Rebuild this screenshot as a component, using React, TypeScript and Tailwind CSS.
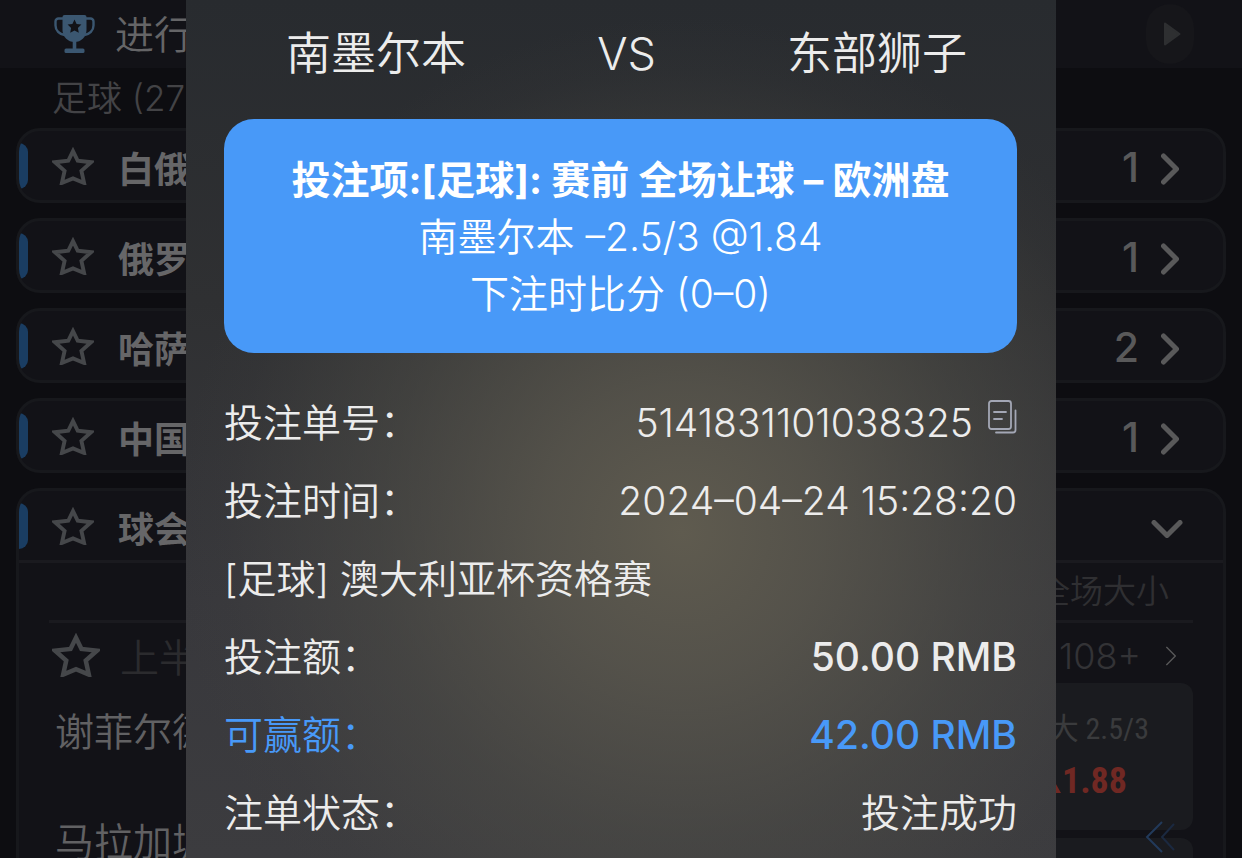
import React from 'react';

const leagues = [
  { name: '白俄', count: 1 },
  { name: '俄罗', count: 1 },
  { name: '哈萨', count: 2 },
  { name: '中国', count: 1 },
];

const StarIcon: React.FC<{ className?: string }> = ({ className }) => (
  <svg viewBox="1 1 40 37" fill="none" stroke="#45474a" strokeWidth="3.8" strokeLinejoin="miter" className={className}>
    <path d="M21 5l4.600 9.400 13 1.400-9.400 8.400 2.600 11.800L21 31.500l-10.800 4.500 2.600-11.800L3.400 15.800l13-1.400z" />
  </svg>
);

const TrophyIcon: React.FC = () => (
  <svg viewBox="0 0 41 38" fill="none" className="h-[38px] w-[41px]">
    <path d="M9 3.500H4.500a3 3 0 0 0-3 3v4c0 5 4 9 9 9.500M32 3.500h4.500a3 3 0 0 1 3 3v4c0 5-4 9-9 9.500" stroke="#3b5771" strokeWidth="2.400" />
    <path d="M10.500 0h20a2 2 0 0 1 2 2v13a12 12 0 0 1-24 0V2a2 2 0 0 1 2-2z" fill="#3b5771" />
    <path d="M18.700 26h3.600v9h-3.600z" fill="#3b5771" />
    <rect x="10.500" y="33.500" width="20" height="4.500" rx="1.500" fill="#3b5771" />
    <path d="M20.500 4.500l2.100 4.400 4.800.6-3.500 3.400.9 4.800-4.300-2.300-4.300 2.300.9-4.800-3.500-3.400 4.800-.6z" fill="#121217" />
  </svg>
);

const CopyIcon: React.FC = () => (
  <svg viewBox="0 0 29 34" fill="none" stroke="#a3a7b5" strokeWidth="1.800" strokeLinecap="round" className="h-[34px] w-[29px]">
    <rect x="1" y="1" width="22" height="28" rx="2.500" />
    <path d="M6 12h12M6 19h8M27.500 10.500V30a2.500 2.500 0 0 1-2.500 2.500H8" />
  </svg>
);

const Chevron: React.FC<{ className?: string; strokeWidth?: number }> = ({ className, strokeWidth = 5 }) => (
  <svg viewBox="0 0 18 32" fill="none" stroke="#59595a" strokeWidth={strokeWidth} strokeLinecap="round" strokeLinejoin="round" className={className}>
    <path d="M2.500 3L15.500 16 2.500 29" />
  </svg>
);

const LeagueHeader: React.FC<{ name: string; children: React.ReactNode }> = ({ name, children }) => (
  <div className="flex h-[69px] items-center pr-10">
    <span className="h-[46px] w-[9px] rounded-r-[9px] bg-[#1a3d62]" />
    <button aria-label="收藏" className="ml-6">
      <StarIcon className="h-[38px] w-[42px]" />
    </button>
    <h2 className="mt-2 ml-6 flex-1 text-[36px] leading-none font-bold text-[#666668]">{name}</h2>
    {children}
  </div>
);

const DetailRow: React.FC<{ label: string; className?: string; children: React.ReactNode }> = ({ label, className = '', children }) => (
  <div className={`flex h-[78px] items-center justify-between ${className}`}>
    <dt>{label}</dt>
    <dd className="flex items-center">{children}</dd>
  </div>
);

const MatchList: React.FC = () => (
  <div>
    <header className="flex h-[68px] items-center bg-[#121217] pr-12 pl-[54px]">
      <TrophyIcon />
      <h1 className="ml-5 flex-1 text-[39px] leading-none font-[350] text-[#656567]">进行</h1>
      <button aria-label="播放" className="flex h-[60px] w-12 items-center justify-center rounded-full bg-[#16161a]">
        <svg viewBox="0 0 18 24" className="ml-1 h-6 w-[18px]">
          <path d="M2 1.500L16.500 12 2 22.500z" fill="#2e2f31" stroke="#2e2f31" strokeWidth="2" strokeLinejoin="round" />
        </svg>
      </button>
    </header>

    <p className="h-[60px] pl-[52px] text-[35px] leading-[60px] font-[350] text-[#434346]">足球 (27</p>

    <main className="flex flex-col gap-[15px] px-4">
      {leagues.map((league) => (
        <section key={league.name} className="overflow-hidden rounded-[24px] border-[3px] border-[#17181c] bg-[#121217]">
          <LeagueHeader name={league.name}>
            <span className="mt-1 text-[41px] leading-none font-medium text-[#59595a]">{league.count}</span>
            <button aria-label="展开" className="mt-1.5 mr-1 ml-[22px]">
              <Chevron className="h-8 w-[18px]" />
            </button>
          </LeagueHeader>
        </section>
      ))}

      {/* Expanded league */}
      <section className="overflow-hidden rounded-t-[24px] border-[3px] border-b-0 border-[#17181c] bg-[#121217]">
        <LeagueHeader name="球会">
          <button aria-label="收起" className="mt-1.5 flex w-8 justify-center">
            <Chevron className="h-8 w-[18px] rotate-90" />
          </button>
        </LeagueHeader>
        <div className="border-t-[3px] border-[#1a1a1f] px-[30px]">
          <div className="flex h-[60px] items-center justify-end border-b-[3px] border-[#1a1a1f] pr-6 text-[33px] leading-none font-[350] text-[#2f2f32]">
            全场大小
          </div>
          <div className="flex h-[60px] items-center pr-4 text-[39px] leading-none font-[350] text-[#2b2b2e]">
            <button aria-label="收藏" className="mt-1 ml-[3px]">
              <StarIcon className="h-[44px] w-12" />
            </button>
            <span className="mt-2 ml-5 flex-1">上半</span>
            <a href="#markets" className="mt-1.5 flex items-center text-[36px] text-[#333336]">
              108+
              <Chevron className="ml-6 h-6 w-3" strokeWidth={2} />
            </a>
          </div>
          <div className="flex justify-between">
            <div className="flex flex-col pl-[6px] text-[39px] leading-[98px] font-[350] text-[#616163]">
              <span>谢菲尔德</span>
              <span className="mt-3">马拉加城</span>
            </div>
            <div className="flex w-[230px] flex-col gap-2 font-['Roboto_Condensed','Noto_Sans_CJK_SC',sans-serif]">
              <button className="flex h-[147px] flex-col items-end justify-center rounded-xl bg-[#1a1b1f] pr-11 pb-1 leading-[52px]">
                <span className="text-[30px] text-[#3a3b3d]">大 2.5/3</span>
                <span className="flex items-center pr-[22px] text-[36px] font-bold text-[#702823]">
                  <svg viewBox="0 0 20 18" className="mt-2 h-[18px] w-5">
                    <path d="M10 1l9 16H1z" fill="#702823" />
                  </svg>
                  1.88
                </span>
              </button>
              <button aria-label="小球盘口" className="h-[147px] rounded-xl bg-[#1a1b1f]" />
            </div>
          </div>
        </div>
      </section>
    </main>
  </div>
);

const BetDetail: React.FC = () => (
  <div
    role="dialog"
    aria-label="注单详情"
    className="min-h-full w-full max-w-[870px] bg-[radial-gradient(ellipse_58%_60%_at_57%_62%,#5f5b4f_0%,#5b584ecc_28%,#504f4880_60%,#4645421a_90%,transparent_100%),linear-gradient(180deg,#282b2f_0%,#2f3032_35%,#38383c_70%,#3c3c3f_100%)] pr-[39px] pl-[38px] text-[39px] leading-[57px] font-[350] text-[#ececec]"
  >
    <div className="flex h-[119px] items-center justify-between pr-[50px] pb-3 pl-[62px] text-[45px]">
      <span>南墨尔本</span>
      <span>VS</span>
      <span>东部狮子</span>
    </div>

    <div className="rounded-[30px] bg-[#4899f8] pt-8 pb-[31px] text-center text-white">
      <p className="font-bold">投注项:[足球]: 赛前 全场让球 – 欧洲盘</p>
      <p>南墨尔本 –2.5/3 @1.84</p>
      <p>下注时比分 (0–0)</p>
    </div>

    <dl className="mt-[30px]">
      <DetailRow label="投注单号：">
        5141831101038325
        <button aria-label="复制单号" className="ml-[15px] pb-2.5">
          <CopyIcon />
        </button>
      </DetailRow>
      <DetailRow label="投注时间：">2024–04–24 15:28:20</DetailRow>
      <div className="flex h-[78px] items-center">[足球] 澳大利亚杯资格赛</div>
      <DetailRow label="投注额：">
        <span className="font-[450]">50.00 RMB</span>
      </DetailRow>
      <DetailRow label="可赢额：" className="text-[#4899f8]">
        <span className="font-[450]">42.00 RMB</span>
      </DetailRow>
      <DetailRow label="注单状态：">投注成功</DetailRow>
    </dl>
  </div>
);

export default function App() {
  return (
    <div lang="zh-CN" className="relative h-screen overflow-hidden bg-[#0d0d11] font-[Inter,'Noto_Sans_CJK_SC',sans-serif]">
      <MatchList />

      {/* Side drawer handle */}
      <button aria-label="打开侧栏" className="absolute right-[66px] bottom-1">
        <svg viewBox="0 0 32 34" fill="none" strokeWidth="2" className="h-[34px] w-8">
          <path d="M18 2L3 17l15 15" stroke="#223a5a" />
          <path d="M30 4L18 17l12 13" stroke="#1b2940" />
        </svg>
      </button>

      <div className="absolute inset-0 flex justify-center">
        <BetDetail />
      </div>
    </div>
  );
}
